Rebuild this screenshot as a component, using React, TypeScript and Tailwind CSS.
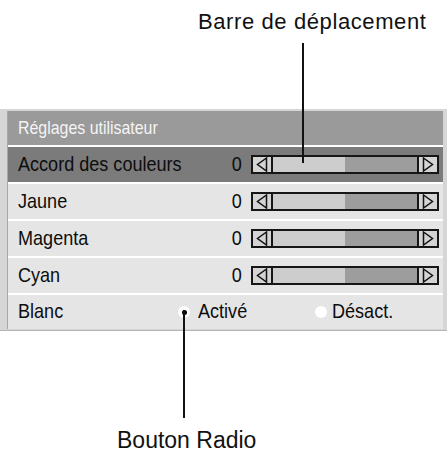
import React from "react"

const arial = { fontFamily: '"Liberation Sans", Arial, sans-serif' }

// condensed label text: Liberation Sans squeezed to the width of a narrow face
const Narrow: React.FC<{ className?: string; right?: boolean; children: React.ReactNode }> = ({ className, right, children }) => (
    <span
        className={"inline-block leading-none scale-x-[0.86] " + (right ? "origin-right " : "origin-left ") + (className ?? "")}
        style={arial}
    >
        {children}
    </span>
)

interface SliderRowProps {
    label: string
    value: number
    active?: boolean
}

const Arrow: React.FC<{ dir: "left" | "right" }> = ({ dir }) => (
    <div className="w-[18px] h-full bg-[#d4d4d4] flex items-center justify-center">
        <svg width="12" height="15" viewBox="0 0 12 15">
            {dir === "left" ? (
                <polygon points="10.5,1 1.5,7.5 10.5,14" fill="none" stroke="#111" strokeWidth="1.5" />
            ) : (
                <polygon points="1.5,1 10.5,7.5 1.5,14" fill="none" stroke="#111" strokeWidth="1.5" />
            )}
        </svg>
    </div>
)

const SliderRow: React.FC<SliderRowProps> = ({ label, value, active }) => (
    <div className={"h-[35px] flex items-center pl-[10px] pr-[4px] " + (active ? "bg-[#7b7b7b]" : "bg-[#e5e5e5]")}>
        <div className="w-[215px]">
            <Narrow className="text-[21px] text-[#0d0d0d] whitespace-nowrap">{label}</Narrow>
        </div>
        <div className="w-[13px] text-right">
            <Narrow right className="text-[21px] text-[#0d0d0d]">{value}</Narrow>
        </div>
        <div className="ml-[9px] w-[192px] h-[19px] border-2 border-[#161616] flex">
            <Arrow dir="left" />
            <div className="w-[2px] bg-[#161616]" />
            <div className="flex-1 bg-[#cdcdcd]" />
            <div className="flex-1 bg-[#9d9d9d]" />
            <div className="w-[2px] bg-[#161616]" />
            <Arrow dir="right" />
        </div>
    </div>
)

const Radio: React.FC<{ checked?: boolean }> = ({ checked }) => (
    <span className="w-[12px] h-[12px] rounded-full bg-white flex items-center justify-center">
        {checked && <span className="w-[5px] h-[5px] rounded-full bg-black" />}
    </span>
)

export default function App() {
    return (
        <div className="relative w-[448px] h-[454px] bg-white overflow-hidden">
            <div className="pt-[9px] pl-[198px] text-[22px] leading-[25px] text-[#111] tracking-[0.6px]" style={arial}>
                Barre de déplacement
            </div>

            <div className="mt-[75px] w-[447px] h-[222px] bg-[#d6d6d6] pl-[7px] pr-[4px] pt-[2px] pb-[3px] border-b border-[#b5b5b5]">
                <div className="flex flex-col gap-[2px] bg-white border-l border-[#a8a8a8]">
                    <div className="h-[34px] bg-[#9a9a9a] flex items-center pl-[10px]">
                        <Narrow className="text-[18.5px] text-[#f4f4f4] whitespace-nowrap">Réglages utilisateur</Narrow>
                    </div>
                    <SliderRow label="Accord des couleurs" value={0} active />
                    <SliderRow label="Jaune" value={0} />
                    <SliderRow label="Magenta" value={0} />
                    <SliderRow label="Cyan" value={0} />
                    <div className="h-[34px] bg-[#e5e5e5] flex items-center pl-[10px]">
                        <div className="w-[160px]">
                            <Narrow className="text-[21px] text-[#0d0d0d]">Blanc</Narrow>
                        </div>
                        <Radio checked />
                        <div className="ml-[8px] w-[117px]">
                            <Narrow className="text-[21px] text-[#0d0d0d]">Activé</Narrow>
                        </div>
                        <Radio />
                        <div className="ml-[5px]">
                            <Narrow className="text-[21px] text-[#0d0d0d]">Désact.</Narrow>
                        </div>
                    </div>
                </div>
            </div>

            <div className="mt-[96px] pl-[117px] text-[23px] leading-[26px] text-[#111]" style={arial}>
                Bouton Radio
            </div>

            {/* callout leaders */}
            <div className="absolute left-[302px] top-[43px] w-[2px] h-[120px] bg-[#111]" />
            <div className="absolute left-[183px] top-[310px] w-[2px] h-[108px] bg-[#111]" />
        </div>
    )
}
